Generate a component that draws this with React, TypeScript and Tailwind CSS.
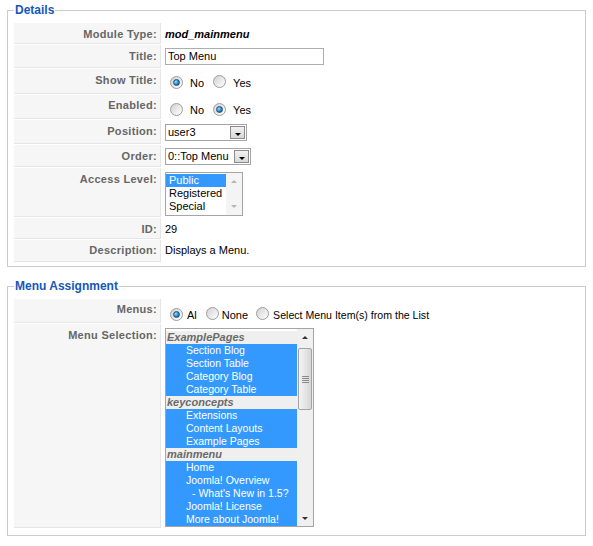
import React from "react";

const FONT = "font-['Liberation_Sans',Arial,sans-serif]";

function Radio({ checked }: { checked?: boolean }) {
  return (
    <span className="inline-flex w-[13px] h-[13px] shrink-0 items-center justify-center rounded-full border border-[#9c9c9c] bg-linear-to-br from-[#d2d2d2] to-[#ffffff]">
      {checked && (
        <span className="w-[7px] h-[7px] rounded-full border border-[#1d4f7a] bg-radial-[at_35%_35%] from-[#9fe0ff] via-[#2a8fd0] to-[#0c4478]" />
      )}
    </span>
  );
}

function DropArrow() {
  return (
    <span className="w-0 h-0 border-l-[3px] border-r-[3px] border-t-[3px] border-l-transparent border-r-transparent border-t-black mt-[3px]" />
  );
}

function Select({ value, width }: { value: string; width: string }) {
  return (
    <div className={`flex items-stretch h-[17px] border border-[#a5a5a5] bg-white ${width}`}>
      <span className="flex-1 pl-[2px] leading-[15px] text-[11px] text-black whitespace-nowrap overflow-hidden">{value}</span>
      <span className="m-px w-[15px] flex items-center justify-center border border-[#8c8c8c] bg-linear-to-b from-[#f2f2f2] to-[#d8d8d8]">
        <DropArrow />
      </span>
    </div>
  );
}

function Row({
  label,
  h,
  children,
  vpt,
  lpt = "pt-[5px]",
}: {
  label: string;
  h: string;
  children?: React.ReactNode;
  vpt: string;
  lpt?: string;
}) {
  return (
    <div className={`flex ${h}`}>
      <div
        className={`w-[147px] shrink-0 bg-[#f6f6f6] border-b border-r border-[#e6e6e6] text-right pr-[3px] ${lpt} leading-[13px] text-[11px] tracking-[0.3px] font-bold text-[#666666]`}
      >
        {label}
      </div>
      <div className={`flex-1 pl-[4px] ${vpt} text-[11px] leading-[13px] text-black`}>{children}</div>
    </div>
  );
}

function ScrollArrow({ up, faded }: { up?: boolean; faded?: boolean }) {
  const c = faded ? "border-b-[#b5b5b5]" : "border-b-[#333333]";
  const c2 = faded ? "border-t-[#b5b5b5]" : "border-t-[#333333]";
  return up ? (
    <span className={`w-0 h-0 border-l-[3px] border-r-[3px] border-b-[3px] border-l-transparent border-r-transparent ${c}`} />
  ) : (
    <span className={`w-0 h-0 border-l-[3px] border-r-[3px] border-t-[3px] border-l-transparent border-r-transparent ${c2}`} />
  );
}

const menuItems: { t: string; head?: boolean; sub?: boolean }[] = [
  { t: "ExamplePages", head: true },
  { t: "Section Blog" },
  { t: "Section Table" },
  { t: "Category Blog" },
  { t: "Category Table" },
  { t: "keyconcepts", head: true },
  { t: "Extensions" },
  { t: "Content Layouts" },
  { t: "Example Pages" },
  { t: "mainmenu", head: true },
  { t: "Home" },
  { t: "Joomla! Overview" },
  { t: "- What's New in 1.5?", sub: true },
  { t: "Joomla! License" },
  { t: "More about Joomla!" },
];

export default function App() {
  return (
    <div className={`w-[593px] h-[546px] bg-white px-[7px] pt-[2px] ${FONT}`}>
      <fieldset className="border border-[#cccccc] px-[6px] pt-[5px] pb-[4px]">
        <legend className="px-[1px] text-[12px] leading-[16px] font-bold text-[#1657b8]">Details</legend>
        <div className="flex flex-col gap-px">
          <Row label="Module Type:" h="h-[21px]" vpt="pt-[5px]">
            <span className="font-bold italic">mod_mainmenu</span>
          </Row>
          <Row label="Title:" h="h-[23px]" vpt="pt-[3px]">
            <div className="w-[159px] h-[17px] border border-[#adadad] pl-[2px] leading-[15px]">Top Menu</div>
          </Row>
          <Row label="Show Title:" h="h-[25px]" vpt="pt-[7px]">
            <div className="flex items-center h-[13px] pl-[5px]">
              <Radio checked />
              <span className="ml-[7px] mt-[2px]">No</span>
              <span className="ml-[9px]"><Radio /></span>
              <span className="ml-[7px] mt-[2px]">Yes</span>
            </div>
          </Row>
          <Row label="Enabled:" h="h-[24px]" vpt="pt-[8px]" lpt="pt-[4px]">
            <div className="flex items-center h-[13px] pl-[5px]">
              <Radio />
              <span className="ml-[7px] mt-[2px]">No</span>
              <span className="ml-[9px]"><Radio checked /></span>
              <span className="ml-[7px] mt-[2px]">Yes</span>
            </div>
          </Row>
          <Row label="Position:" h="h-[24px]" vpt="pt-[4px]">
            <Select value="user3" width="w-[82px]" />
          </Row>
          <Row label="Order:" h="h-[22px]" vpt="pt-[3px]">
            <Select value="0::Top Menu" width="w-[86px]" />
          </Row>
          <Row label="Access Level:" h="h-[49px]" vpt="pt-[4px]">
            <div className="flex w-[78px] h-[44px] border border-[#a5a5a5] bg-white">
              <div className="flex-1 pt-px">
                <div className="bg-[#3399ff] text-white pl-[3px] leading-[13px]">Public</div>
                <div className="pl-[3px] leading-[13px]">Registered</div>
                <div className="pl-[3px] leading-[13px]">Special</div>
              </div>
              <div className="w-[16px] bg-[#f4f4f4] flex flex-col items-center justify-between py-[7px]">
                <ScrollArrow up faded />
                <ScrollArrow faded />
              </div>
            </div>
          </Row>
          <Row label="ID:" h="h-[21px]" vpt="pt-[5px]">
            29
          </Row>
          <Row label="Description:" h="h-[22px]" vpt="pt-[4px]" lpt="pt-[4px]">
            Displays a Menu.
          </Row>
        </div>
      </fieldset>

      <fieldset className="mt-[11px] border border-[#cccccc] px-[6px] pt-[5px] pb-[7px]">
        <legend className="px-[1px] text-[12px] leading-[16px] font-bold text-[#1657b8]">Menu Assignment</legend>
        <div className="flex flex-col gap-px">
          <Row label="Menus:" h="h-[24px]" vpt="pt-[9px]" lpt="pt-[4px]">
            <div className="flex items-center h-[13px] pl-[5px]">
              <Radio checked />
              <span className="ml-[4px] mt-[2px]">Al</span>
              <span className="ml-[9px]"><Radio /></span>
              <span className="ml-[3px] mt-[2px]">None</span>
              <span className="ml-[8px]"><Radio /></span>
              <span className="ml-[4px] mt-[2px] whitespace-nowrap text-[10.6px]">Select Menu Item(s) from the List</span>
            </div>
          </Row>
          <Row label="Menu Selection:" h="h-[204px]" vpt="pt-[4px]">
            <div className="flex w-[149px] h-[199px] border border-[#a5a5a5] bg-white overflow-hidden">
              <div className="flex-1 overflow-hidden pt-[2px]">
                {menuItems.map((m, i) =>
                  m.head ? (
                    <div
                      key={i}
                      className="h-[13px] bg-[#efefef] pl-[1px] leading-[13px] text-[11px] font-bold italic text-[#6a6a6a] whitespace-nowrap"
                    >
                      {m.t}
                    </div>
                  ) : (
                    <div
                      key={i}
                      className={`h-[13px] bg-[#3399ff] ${m.sub ? "pl-[26px]" : "pl-[20px]"} leading-[13px] text-[10.5px] text-white whitespace-nowrap`}
                    >
                      {m.t}
                    </div>
                  )
                )}
              </div>
              <div className="w-[16px] shrink-0 bg-[#f0f0f0] flex flex-col items-center pt-[7px] pb-[6px]">
                <ScrollArrow up />
                <div className="mt-[9px] w-[14px] h-[62px] rounded-[2px] border border-[#a3a3a3] bg-linear-to-r from-[#f3f3f3] via-[#e6e6e6] to-[#d6d6d6] flex flex-col items-center justify-center gap-[1px]">
                  <span className="w-[7px] h-px bg-[#8a8a8a]" />
                  <span className="w-[7px] h-px bg-[#8a8a8a]" />
                  <span className="w-[7px] h-px bg-[#8a8a8a]" />
                  <span className="w-[7px] h-px bg-[#8a8a8a]" />
                </div>
                <div className="flex-1" />
                <ScrollArrow />
              </div>
            </div>
          </Row>
        </div>
      </fieldset>
    </div>
  );
}
